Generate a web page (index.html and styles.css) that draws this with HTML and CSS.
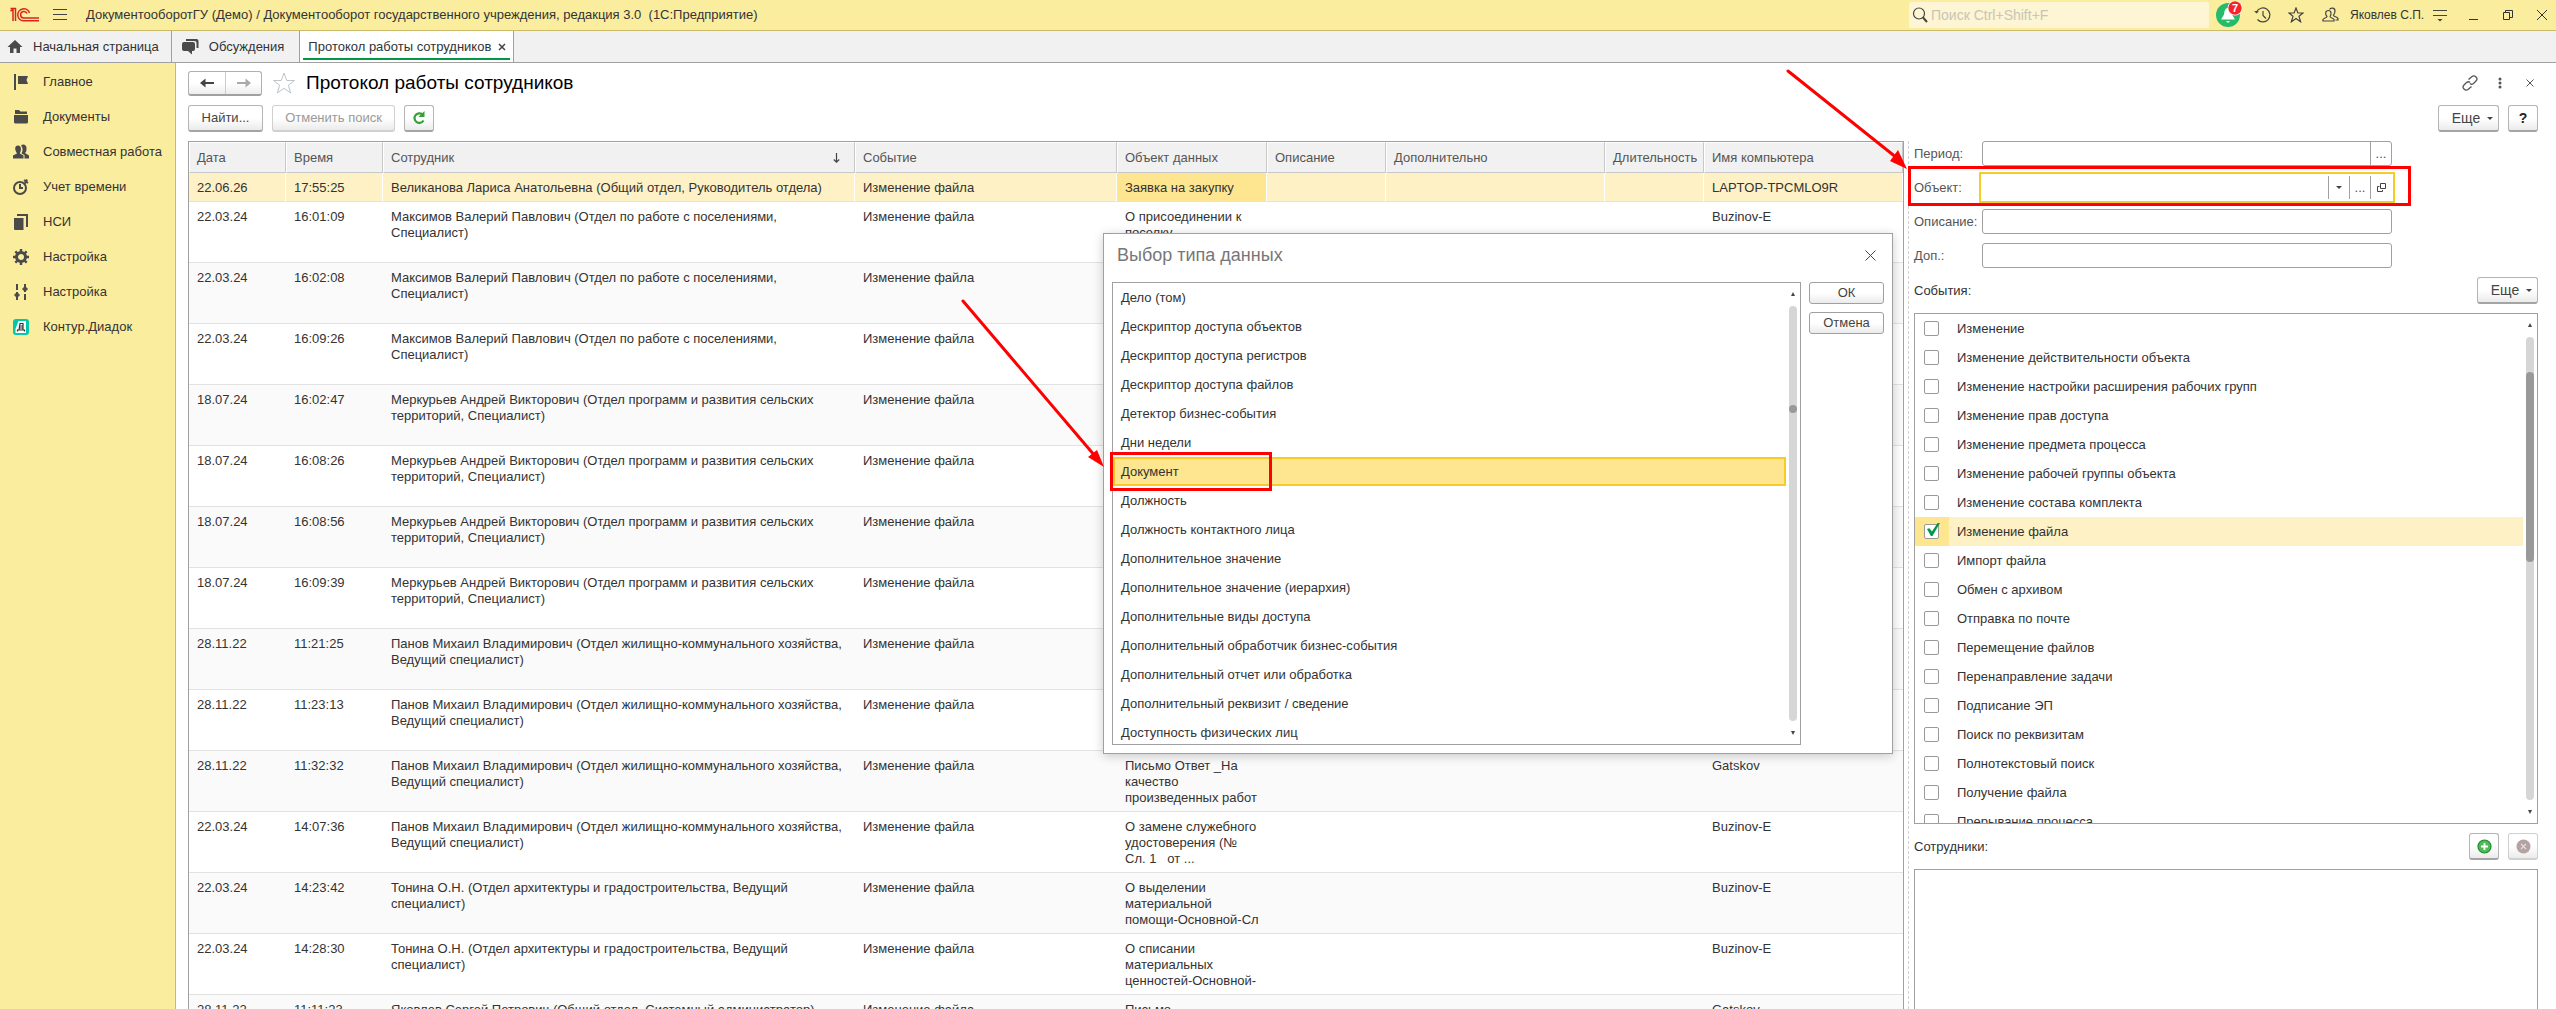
FILE: index.html
```html
<!DOCTYPE html>
<html lang="ru">
<head>
    <meta charset="UTF-8">
    <meta name="viewport" content="width=device-width, initial-scale=1.0">
    <title>Протокол работы сотрудников</title>
    <link rel="stylesheet" href="styles.css">
</head>
<body>
    <!-- title bar -->
    <header class="topbar">
        <svg class="logo" width="30" height="16" viewBox="0 0 30 16" fill="none" stroke="#d9251d" stroke-width="1.500">
            <path d="M.5 4L3 2.500V14M.5 1.500H5.500V14"/>
            <path d="M19.500 6A6 6 0 1 0 13.500 13.800H29M17 6.500A3.300 3.300 0 1 0 13.500 11H29"/>
        </svg>
        <button class="icon-btn" aria-label="Меню">
            <svg width="14" height="12" viewBox="0 0 14 12" stroke="#444" stroke-width="1"><path d="M0 .5H14M0 5.500H14M0 10.500H14"/></svg>
        </button>
        <div class="app-title">ДокументооборотГУ (Демо) / Документооборот государственного учреждения, редакция 3.0&nbsp; (1С:Предприятие)</div>
        <label class="search">
            <svg width="16" height="16" viewBox="0 0 16 16" fill="none" stroke="#444"><circle cx="7" cy="6.500" r="5.500" stroke-width="1.200"/><path d="M11 10.500L15 15" stroke-width="2"/></svg>
            <input type="text" placeholder="Поиск Ctrl+Shift+F" aria-label="Поиск">
        </label>
        <div class="top-icons">
            <button class="icon-btn" aria-label="Оповещения">
                <svg width="28" height="28" viewBox="0 0 28 28"><circle cx="14" cy="14" r="12" fill="#27bb69"/><path d="M14 7C11 7 10.500 10 10 13.500L7 18.500H21L18 13.500C17.500 10 17 7 14 7ZM12 20H16L14 22Z" fill="#fff"/><circle cx="21" cy="7" r="7.500" fill="#fff"/><circle cx="21" cy="7" r="6.700" fill="#f8222c"/></svg>
                <span class="badge">7</span>
            </button>
            <button class="icon-btn" aria-label="История">
                <svg width="17" height="16" viewBox="0 0 17 16" fill="none" stroke="#444" stroke-width="1.200"><path d="M2.500 5A7 7 0 1 1 3.500 12.500M9 4V8.500L12 11.500"/><path d="M0 4L2.500 6.500L5 4.500Z" fill="#444" stroke="none"/></svg>
            </button>
            <button class="icon-btn" aria-label="Избранное">
                <svg width="16" height="16" viewBox="0 0 16 16" fill="none" stroke="#444" stroke-width="1.200"><path d="M8 1L9.900 6H15L11 9.200L12.600 14.800L8 11.500L3.400 14.800L5 9.200L1 6H6.100Z"/></svg>
            </button>
            <button class="icon-btn" aria-label="Пользователи">
                <svg width="17" height="16" viewBox="0 0 17 16" fill="none" stroke="#444" stroke-width="1.200"><path d="M1 14V12.500C1.500 11 5 11 5 9.500C3 7.500 3 3.500 6.300 3.500S9.600 7.500 8 9.500C8 11 11.500 11 12 12.500V14ZM7.500 2.500C8.500 .5 13 .5 13 4C13 6 12.500 7 11.500 8.200C11.500 10 15.500 9.500 16 11.500V13H13.500"/></svg>
            </button>
            <span class="user-name">Яковлев С.П.</span>
            <button class="icon-btn" aria-label="Настройки окна">
                <svg width="14" height="14" viewBox="0 0 14 14"><path d="M0 2.500H14M0 7.500H14" stroke="#444" stroke-width="1"/><path d="M4.500 11H9.500L7 13.500Z" fill="#444"/></svg>
            </button>
            <button class="icon-btn" aria-label="Свернуть">
                <svg width="10" height="10" viewBox="0 0 10 10"><path d="M0 9.500H9" stroke="#333"/></svg>
            </button>
            <button class="icon-btn" aria-label="Развернуть">
                <svg width="10" height="10" viewBox="0 0 10 10" fill="none" stroke="#333"><path d="M2.500 2.500V.5H9.500V7.500H6.500M.5 2.500H6.500V9.500H.5Z"/></svg>
            </button>
            <button class="icon-btn" aria-label="Закрыть">
                <svg width="10" height="10" viewBox="0 0 10 10" stroke="#333"><path d="M0 0L10 10M10 0L0 10"/></svg>
            </button>
        </div>
    </header>

    <!-- open tabs -->
    <nav class="tabs">
        <a class="tab" href="#">
            <svg width="16" height="14" viewBox="0 0 16 14" fill="#4a4a4a"><path d="M8 0L15.500 7H13V13H9.500V8.500H6.500V13H3V7H.5Z"/></svg>
            Начальная страница
        </a>
        <a class="tab" href="#">
            <svg width="17" height="16" viewBox="0 0 17 16" fill="#4a4a4a"><path d="M2 3H11Q13 3 13 5V10Q13 12 11 12H10V15.500L6 12H2Q0 12 0 10V5Q0 3 2 3Z"/><path d="M4 0H14.500Q16.500 0 16.500 2V9H14.500V4Q14.500 2 12.500 2H4Z"/></svg>
            Обсуждения
        </a>
        <a class="tab active" href="#">
            Протокол работы сотрудников
            <svg width="8" height="8" viewBox="0 0 8 8" stroke="#444" stroke-width="1.500"><path d="M1 1L7 7M7 1L1 7"/></svg>
        </a>
    </nav>

    <div class="workspace">
        <!-- sections -->
        <nav class="sidebar">
            <a href="#"><svg width="16" height="16" viewBox="0 0 16 16" fill="#4a4a4a"><path d="M1 0H3V16H1ZM5 2H15L13.500 6L15 10H5Z"/></svg>Главное</a>
            <a href="#"><svg width="16" height="16" viewBox="0 0 16 16" fill="#4a4a4a"><path d="M2 1H6L7.500 2.500H14V5H2ZM1 6H15V13Q15 14.500 13.500 14.500H2.500Q1 14.500 1 13Z"/></svg>Документы</a>
            <a href="#"><svg width="16" height="16" viewBox="0 0 16 16" fill="#4a4a4a"><path d="M0 14.500V11.500L4 9.500C1 5 2 1.500 5 1.500S9 5 6.800 9.500L10.500 11.500V14.500ZM8 1.500C10 -.5 14 .5 13.500 5C13.500 7 13 8 12 9L16 11.500V14.500H11.500V11L8.500 9.500C10 7 10 4 8 1.500Z"/></svg>Совместная работа</a>
            <a href="#"><svg width="16" height="16" viewBox="0 0 16 16" fill="none" stroke="#4a4a4a" stroke-width="2"><circle cx="7" cy="9" r="6"/><path d="M7 5V9H10M11 1L15 4M14 .5L12 4.500"/></svg>Учет времени</a>
            <a href="#"><svg width="16" height="16" viewBox="0 0 16 16" fill="#4a4a4a"><path d="M1 4H10.500V16H2Q1 16 1 15ZM4 0H15V13H13V2H4Z"/></svg>НСИ</a>
            <a href="#"><svg width="16" height="16" viewBox="0 0 16 16" fill="none" stroke="#4a4a4a"><circle cx="8" cy="8" r="4.500" stroke-width="3"/><path d="M8 0V3M8 13V16M0 8H3M13 8H16M2.300 2.300L4.500 4.500M11.500 11.500L13.700 13.700M2.300 13.700L4.500 11.500M11.500 4.500L13.700 2.300" stroke-width="2.400"/></svg>Настройка</a>
            <a href="#"><svg width="16" height="16" viewBox="0 0 16 16" fill="#4a4a4a"><path d="M3 0H5V6H3ZM3 8H5V16H3ZM11 0H13V8H11ZM11 10H13V16H11Z"/><path d="M4 8.500L6.500 11L4 13.500L1.500 11ZM12 2.500L14.500 5L12 7.500L9.500 5Z" stroke="#4a4a4a"/></svg>Настройка</a>
            <a href="#"><svg width="16" height="16" viewBox="0 0 16 16"><rect width="16" height="16" rx="3" fill="#00c8aa"/><path d="M5.500 2H13V14H2.500V10Z" fill="#fff"/><path d="M4.500 12.500V11H11.500V12.500M6 11L7 4.500H10V11M7 7H10M6.500 9H10" fill="none" stroke="#333" stroke-width="1.200"/></svg>Контур.Диадок</a>
        </nav>

        <main class="page">
            <div class="page-head">
                <div class="nav-buttons">
                    <button aria-label="Назад"><svg width="14" height="10" viewBox="0 0 14 10" fill="#444"><path d="M0 5L5.500 .5V4H14V6H5.500V9.500Z"/></svg></button>
                    <button aria-label="Вперед"><svg width="14" height="10" viewBox="0 0 14 10" fill="#aaa"><path d="M14 5L8.500 .5V4H0V6H8.500V9.500Z"/></svg></button>
                </div>
                <svg width="24" height="24" viewBox="0 0 24 24" fill="none" stroke="#bcc3c9"><path d="M12 2L14.800 9.500H22.500L16.400 14.200L18.700 22L12 17.300L5.300 22L7.600 14.200L1.500 9.500H9.200Z"/></svg>
                <h1>Протокол работы сотрудников</h1>
                <div class="page-icons">
                    <button class="icon-btn" aria-label="Ссылка"><svg width="16" height="16" viewBox="0 0 16 16" fill="none" stroke="#555" stroke-width="1.300"><path d="M6.500 4.500L10 1.500Q12 0 14 2T14 6L11.500 8.500Q9.500 10 8 8.500M9.500 11.500L6 14.500Q4 16 2 14T2 10L4.500 7.500Q6.500 6 8 7.500"/></svg></button>
                    <button class="icon-btn" aria-label="Дополнительно"><svg width="4" height="12" viewBox="0 0 4 12" fill="#555"><circle cx="2" cy="2" r="1.500"/><circle cx="2" cy="6" r="1.500"/><circle cx="2" cy="10" r="1.500"/></svg></button>
                    <button class="icon-btn" aria-label="Закрыть форму"><svg width="8" height="8" viewBox="0 0 8 8" stroke="#555"><path d="M.5 .5L7.500 7.500M7.500 .5L.5 7.500"/></svg></button>
                </div>
            </div>

            <div class="toolbar">
                <button class="btn find">Найти...</button>
                <button class="btn cancel" disabled>Отменить поиск</button>
                <button class="btn square" aria-label="Обновить"><svg width="14" height="14" viewBox="0 0 14 14"><path d="M10.500 3.500A4.800 4.800 0 1 0 11.500 9.500" fill="none" stroke="#35a035" stroke-width="2.200"/><path d="M12.500 0V6H6.500Z" fill="#35a035"/></svg></button>
                <span class="spacer"></span>
                <button class="btn more">Еще<i class="caret"></i></button>
                <button class="btn square help">?</button>
            </div>

            <div class="content">
                <div class="log">
                    <table>
                        <colgroup>
                            <col class="c-date"><col class="c-time"><col class="c-user"><col class="c-event"><col class="c-object"><col class="c-desc"><col class="c-extra"><col class="c-length"><col class="c-host">
                        </colgroup>
                        <thead>
                            <tr>
                                <th>Дата</th>
                                <th>Время</th>
                                <th><div class="sorted">Сотрудник<svg width="7" height="10" viewBox="0 0 7 10" fill="none" stroke="#444" stroke-width="1.200"><path d="M3.500 0V9M.8 6.500L3.500 9.200L6.200 6.500"/></svg></div></th>
                                <th>Событие</th>
                                <th>Объект данных</th>
                                <th>Описание</th>
                                <th>Дополнительно</th>
                                <th>Длительность</th>
                                <th>Имя компьютера</th>
                            </tr>
                        </thead>
                        <tbody>
                            <tr class="current"><td>22.06.26</td><td>17:55:25</td><td>Великанова Лариса Анатольевна (Общий отдел, Руководитель отдела)</td><td>Изменение файла</td><td class="cell-active">Заявка на закупку</td><td></td><td></td><td></td><td>LAPTOP-TPCMLO9R</td></tr>
                            <tr><td>22.03.24</td><td>16:01:09</td><td>Максимов Валерий Павлович (Отдел по работе с поселениями, Специалист)</td><td>Изменение файла</td><td>О присоединении к поселку</td><td></td><td></td><td></td><td>Buzinov-E</td></tr>
                            <tr><td>22.03.24</td><td>16:02:08</td><td>Максимов Валерий Павлович (Отдел по работе с поселениями, Специалист)</td><td>Изменение файла</td><td></td><td></td><td></td><td></td><td></td></tr>
                            <tr><td>22.03.24</td><td>16:09:26</td><td>Максимов Валерий Павлович (Отдел по работе с поселениями, Специалист)</td><td>Изменение файла</td><td></td><td></td><td></td><td></td><td></td></tr>
                            <tr><td>18.07.24</td><td>16:02:47</td><td>Меркурьев Андрей Викторович (Отдел программ и развития сельских территорий, Специалист)</td><td>Изменение файла</td><td></td><td></td><td></td><td></td><td></td></tr>
                            <tr><td>18.07.24</td><td>16:08:26</td><td>Меркурьев Андрей Викторович (Отдел программ и развития сельских территорий, Специалист)</td><td>Изменение файла</td><td></td><td></td><td></td><td></td><td></td></tr>
                            <tr><td>18.07.24</td><td>16:08:56</td><td>Меркурьев Андрей Викторович (Отдел программ и развития сельских территорий, Специалист)</td><td>Изменение файла</td><td></td><td></td><td></td><td></td><td></td></tr>
                            <tr><td>18.07.24</td><td>16:09:39</td><td>Меркурьев Андрей Викторович (Отдел программ и развития сельских территорий, Специалист)</td><td>Изменение файла</td><td></td><td></td><td></td><td></td><td></td></tr>
                            <tr><td>28.11.22</td><td>11:21:25</td><td>Панов Михаил Владимирович (Отдел жилищно-коммунального хозяйства, Ведущий специалист)</td><td>Изменение файла</td><td></td><td></td><td></td><td></td><td></td></tr>
                            <tr><td>28.11.22</td><td>11:23:13</td><td>Панов Михаил Владимирович (Отдел жилищно-коммунального хозяйства, Ведущий специалист)</td><td>Изменение файла</td><td></td><td></td><td></td><td></td><td></td></tr>
                            <tr><td>28.11.22</td><td>11:32:32</td><td>Панов Михаил Владимирович (Отдел жилищно-коммунального хозяйства, Ведущий специалист)</td><td>Изменение файла</td><td>Письмо Ответ _На<br>качество<br>произведенных работ</td><td></td><td></td><td></td><td>Gatskov</td></tr>
                            <tr><td>22.03.24</td><td>14:07:36</td><td>Панов Михаил Владимирович (Отдел жилищно-коммунального хозяйства, Ведущий специалист)</td><td>Изменение файла</td><td>О замене служебного<br>удостоверения (№<br>Сл. 1 &nbsp; от ...</td><td></td><td></td><td></td><td>Buzinov-E</td></tr>
                            <tr><td>22.03.24</td><td>14:23:42</td><td>Тонина О.Н. (Отдел архитектуры и градостроительства, Ведущий специалист)</td><td>Изменение файла</td><td>О выделении<br>материальной<br>помощи-Основной-Сл</td><td></td><td></td><td></td><td>Buzinov-E</td></tr>
                            <tr><td>22.03.24</td><td>14:28:30</td><td>Тонина О.Н. (Отдел архитектуры и градостроительства, Ведущий специалист)</td><td>Изменение файла</td><td>О списании<br>материальных<br>ценностей-Основной-</td><td></td><td></td><td></td><td>Buzinov-E</td></tr>
                            <tr><td>28.11.22</td><td>11:11:23</td><td>Яковлев Сергей Петрович (Общий отдел, Системный администратор)</td><td>Изменение файла</td><td>Письмо</td><td></td><td></td><td></td><td>Gatskov</td></tr>
                        </tbody>
                    </table>
                </div>

                <!-- filters -->
                <aside class="filters">
                    <div class="form">
                        <label for="period">Период:</label>
                        <div class="field">
                            <input type="text" id="period">
                            <button aria-label="Выбрать период">...</button>
                        </div>
                        <label for="object">Объект:</label>
                        <div class="field focused">
                            <input type="text" id="object">
                            <button aria-label="Список"><i class="caret"></i></button>
                            <button aria-label="Выбрать объект">...</button>
                            <button aria-label="Открыть"><svg width="9" height="9" viewBox="0 0 9 9" fill="none" stroke="#444"><path d="M3.500 .5H8.500V5.500H3.500ZM2.500 3.500H.5V8.500H5.500V7"/></svg></button>
                            <div class="mark mark-field"></div>
                            <svg class="arrow arrow-field" width="122" height="102" viewBox="0 0 122 102"><path d="M2 2L111 89" stroke="#f00" stroke-width="3" stroke-linecap="round"/><path d="M121 100L104 92L112 81Z" fill="#f00"/></svg>
                        </div>
                        <label for="descr">Описание:</label>
                        <div class="field"><input type="text" id="descr"></div>
                        <label for="extra">Доп.:</label>
                        <div class="field"><input type="text" id="extra"></div>
                    </div>

                    <div class="group-head">
                        <span>События:</span>
                        <button class="btn more">Еще<i class="caret"></i></button>
                    </div>
                    <div class="list events">
                        <ul>
                            <li><label><span class="tick"><input type="checkbox"></span>Изменение</label></li>
                            <li><label><span class="tick"><input type="checkbox"></span>Изменение действительности объекта</label></li>
                            <li><label><span class="tick"><input type="checkbox"></span>Изменение настройки расширения рабочих групп</label></li>
                            <li><label><span class="tick"><input type="checkbox"></span>Изменение прав доступа</label></li>
                            <li><label><span class="tick"><input type="checkbox"></span>Изменение предмета процесса</label></li>
                            <li><label><span class="tick"><input type="checkbox"></span>Изменение рабочей группы объекта</label></li>
                            <li><label><span class="tick"><input type="checkbox"></span>Изменение состава комплекта</label></li>
                            <li class="current"><label><span class="tick"><input type="checkbox" checked></span>Изменение файла</label></li>
                            <li><label><span class="tick"><input type="checkbox"></span>Импорт файла</label></li>
                            <li><label><span class="tick"><input type="checkbox"></span>Обмен с архивом</label></li>
                            <li><label><span class="tick"><input type="checkbox"></span>Отправка по почте</label></li>
                            <li><label><span class="tick"><input type="checkbox"></span>Перемещение файлов</label></li>
                            <li><label><span class="tick"><input type="checkbox"></span>Перенаправление задачи</label></li>
                            <li><label><span class="tick"><input type="checkbox"></span>Подписание ЭП</label></li>
                            <li><label><span class="tick"><input type="checkbox"></span>Поиск по реквизитам</label></li>
                            <li><label><span class="tick"><input type="checkbox"></span>Полнотекстовый поиск</label></li>
                            <li><label><span class="tick"><input type="checkbox"></span>Получение файла</label></li>
                            <li><label><span class="tick"><input type="checkbox"></span>Прерывание процесса</label></li>
                        </ul>
                        <div class="scroll">
                            <i class="up"></i>
                            <div class="track"><div class="thumb"></div></div>
                            <i class="down"></i>
                        </div>
                    </div>

                    <div class="group-head">
                        <span>Сотрудники:</span>
                        <div class="group-buttons">
                            <button class="btn square" aria-label="Добавить"><svg width="15" height="15" viewBox="0 0 15 15"><circle cx="7.500" cy="7.500" r="6.500" fill="#4fba58" stroke="#1f8a2c" stroke-width="1.200"/><path d="M7.500 4V11M4 7.500H11" stroke="#fff" stroke-width="1.800"/></svg></button>
                            <button class="btn square" aria-label="Удалить" disabled><svg width="15" height="15" viewBox="0 0 15 15"><circle cx="7.500" cy="7.500" r="7" fill="#b5a3a3"/><path d="M5 5L10 10M10 5L5 10" stroke="#ddd" stroke-width="1.300"/></svg></button>
                        </div>
                    </div>
                    <div class="list staff"></div>
                </aside>
            </div>
        </main>
    </div>

    <!-- type picker -->
    <div class="dialog" role="dialog" aria-labelledby="dialog-title">
        <div class="dialog-head">
            <h2 id="dialog-title">Выбор типа данных</h2>
            <button class="icon-btn" aria-label="Закрыть окно"><svg width="11" height="11" viewBox="0 0 11 11" stroke="#444"><path d="M.5 .5L10.500 10.500M10.500 .5L.5 10.500"/></svg></button>
        </div>
        <div class="dialog-body">
            <div class="list types">
                <ul>
                    <li>Дело (том)</li>
                    <li>Дескриптор доступа объектов</li>
                    <li>Дескриптор доступа регистров</li>
                    <li>Дескриптор доступа файлов</li>
                    <li>Детектор бизнес-события</li>
                    <li>Дни недели</li>
                    <li class="selected">Документ</li>
                    <li>Должность</li>
                    <li>Должность контактного лица</li>
                    <li>Дополнительное значение</li>
                    <li>Дополнительное значение (иерархия)</li>
                    <li>Дополнительные виды доступа</li>
                    <li>Дополнительный обработчик бизнес-события</li>
                    <li>Дополнительный отчет или обработка</li>
                    <li>Дополнительный реквизит / сведение</li>
                    <li>Доступность физических лиц</li>
                </ul>
                <div class="scroll">
                    <i class="up"></i>
                    <div class="track"><div class="thumb"></div></div>
                    <i class="down"></i>
                </div>
            </div>
            <div class="dialog-buttons">
                <button class="btn">ОК</button>
                <button class="btn">Отмена</button>
            </div>
        </div>
        <div class="mark mark-type"></div>
        <svg class="arrow arrow-type" width="144" height="170" viewBox="0 0 144 170"><path d="M2 2L134 157" stroke="#f00" stroke-width="3" stroke-linecap="round"/><path d="M143 168L127 158L136 151Z" fill="#f00"/></svg>
    </div>
</body>
</html>
```
FILE: styles.css
```css
* {
    box-sizing: border-box;
}
body {
    margin: 0;
    height: 100vh;
    display: flex;
    flex-direction: column;
    overflow: hidden;
    position: relative;
    font-family: "Liberation Sans", Arial, sans-serif;
    font-size: 13px;
    line-height: 16px;
    color: #333;
    background: #fff;
}
button, input {
    font: inherit;
    color: inherit;
}
button {
    padding: 0;
    border: none;
    background: none;
    cursor: pointer;
}
a {
    color: inherit;
    text-decoration: none;
}
ul {
    list-style: none;
    margin: 0;
    padding: 0;
}
svg {
    flex: none;
    display: block;
}

/* title bar */
.topbar {
    display: flex;
    align-items: center;
    height: 31px;
    padding-left: 10px;
    background: #fbed9e;
    border-bottom: 1px solid #c9bb6a;
}
.icon-btn {
    display: flex;
    align-items: center;
    justify-content: center;
    width: 28px;
    height: 28px;
    position: relative;
}
.logo {
    margin-right: 6px;
}
.app-title {
    flex: 1;
    margin-left: 12px;
    white-space: nowrap;
}
.search {
    display: flex;
    align-items: center;
    width: 300px;
    height: 26px;
    padding-left: 3px;
    gap: 3px;
    background: #fdf5d3;
    border-radius: 2px;
}
.search input {
    flex: 1;
    min-width: 0;
    border: none;
    background: none;
    padding: 0;
    font-size: 14px;
    outline: none;
}
.search input::placeholder {
    color: #c9c5b5;
}
.top-icons {
    display: flex;
    align-items: center;
    gap: 6px;
    margin-left: 5px;
}
.badge {
    position: absolute;
    top: 0;
    right: 0;
    width: 14px;
    line-height: 14px;
    color: #fff;
    font-size: 11px;
    font-weight: bold;
    text-align: center;
}
.user-name {
    width: 70px;
    font-size: 12px;
    white-space: nowrap;
}

/* tabs */
.tabs {
    display: flex;
    height: 32px;
    background: #f1f1f1;
    border-bottom: 1px solid #a0a0a0;
}
.tab {
    display: flex;
    align-items: center;
    gap: 10px;
    padding: 0 12px 0 7px;
    border-right: 1px solid #a0a0a0;
    white-space: nowrap;
}
.tab + .tab {
    padding: 0 15px 0 10px;
}
.tab.tab.active {
    gap: 7px;
    padding: 0 7px 0 8px;
    background: linear-gradient(#009846, #009846) 3px 27px / calc(100% - 6px) 2px no-repeat, #fff;
}

/* sections */
.workspace {
    flex: 1;
    display: flex;
    min-height: 0;
}
.sidebar {
    flex: none;
    width: 176px;
    padding-top: 1px;
    background: #fbed9e;
    border-right: 1px solid #c9bb6a;
}
.sidebar a {
    display: flex;
    align-items: center;
    gap: 14px;
    height: 35px;
    padding-left: 13px;
}

/* page */
.page {
    flex: 1;
    min-width: 0;
    display: flex;
    flex-direction: column;
    gap: 10px;
    padding: 8px 18px 0 12px;
}
.page-head {
    display: flex;
    align-items: center;
    height: 24px;
    gap: 10px;
}
.nav-buttons {
    display: flex;
    height: 25px;
    border: 1px solid #b0b0b0;
    border-bottom: 2px solid #a0a0a0;
    border-radius: 3px;
    background: linear-gradient(#fff 50%, #ededed);
}
.nav-buttons button {
    display: flex;
    align-items: center;
    justify-content: center;
    width: 36px;
}
.nav-buttons button + button {
    border-left: 1px solid #ccc;
}
h1 {
    flex: 1;
    margin: 0;
    font-size: 19px;
    font-weight: normal;
    color: #000;
}
.page-icons {
    display: flex;
    gap: 2px;
    margin-right: -6px;
}
.toolbar {
    display: flex;
    gap: 9px;
    height: 26px;
}
.btn {
    display: flex;
    align-items: center;
    justify-content: center;
    height: 27px;
    border: 1px solid #b4b4b4;
    border-bottom: 2px solid #a4a4a4;
    border-radius: 3px;
    background: linear-gradient(#fff 50%, #ebebeb);
    color: #444;
}
.btn:disabled {
    border-color: #d0d0d0;
    color: #999;
}
.find {
    width: 75px;
}
.cancel {
    width: 123px;
}
.square {
    width: 30px;
}
.help {
    font-size: 14px;
    font-weight: bold;
    color: #222;
}
.spacer {
    flex: 1;
}
.more {
    width: 61px;
    gap: 7px;
    padding-left: 8px;
    font-size: 14px;
}
.caret {
    border: 3px solid transparent;
    border-top-color: #444;
    border-bottom: none;
}

/* log table */
.content {
    flex: 1;
    min-height: 0;
    display: flex;
    gap: 4px;
}
.log {
    flex: 1;
    min-width: 0;
    overflow: hidden;
    border: 1px solid #a0a0a0;
    border-bottom: none;
}
table {
    width: 100%;
    table-layout: fixed;
    border-collapse: separate;
    border-spacing: 0;
}
.c-date, .c-time {
    width: 97px;
}
.c-event {
    width: 262px;
}
.c-object {
    width: 150px;
}
.c-desc {
    width: 119px;
}
.c-extra {
    width: 219px;
}
.c-length {
    width: 99px;
}
.c-host {
    width: 199px;
}
th {
    height: 31px;
    padding: 0 0 0 7px;
    font-weight: normal;
    text-align: left;
    color: #555;
    background: #f1f1f1;
    border: 1px solid #fff;
    border-right-color: #c8c8c8;
    border-bottom-color: #c8c8c8;
    white-space: nowrap;
}
.sorted {
    display: flex;
    align-items: center;
    justify-content: space-between;
    padding-right: 14px;
}
td {
    height: 61px;
    padding: 7px 6px 5px 8px;
    vertical-align: top;
    border-bottom: 1px solid #e2e2e2;
}
tr:nth-child(odd) td {
    background: #fafafa;
}
tr.current td {
    height: 29px;
    background: #fdf1c5;
    border-right: 1px solid #fff;
}
tr.current .cell-active {
    background: #fee58f;
}

/* filters */
.filters {
    flex: none;
    width: 630px;
    display: flex;
    flex-direction: column;
    padding-left: 5px;
    border-left: 1px dashed #d0d0d0;
}
.form {
    display: grid;
    grid-template-columns: 68px 410px;
    row-gap: 9px;
    align-items: center;
    color: #555;
}
.field {
    display: flex;
    position: relative;
    height: 25px;
    border: 1px solid #a0a0a0;
    border-radius: 3px;
    background: #fff;
}
.field input {
    flex: 1;
    min-width: 0;
    padding: 0 6px;
    border: none;
    background: none;
    outline: none;
}
.field button {
    display: flex;
    align-items: center;
    justify-content: center;
    width: 21px;
    border-left: 1px solid #a0a0a0;
}
.field.focused {
    border-color: #fff;
    outline: 2px solid #f8cc26;
    outline-offset: 1px;
    border-radius: 0;
}
.group-head {
    display: flex;
    align-items: center;
    justify-content: space-between;
    height: 27px;
    margin: 9px 0;
}
.group-buttons {
    display: flex;
    gap: 9px;
}
.list {
    display: flex;
    border: 1px solid #a0a0a0;
    background: #fff;
    overflow: hidden;
}
.list ul {
    flex: 1;
}
.list li {
    height: 29px;
    line-height: 29px;
}
.events {
    flex: none;
    height: 511px;
}
.events label {
    display: flex;
    gap: 8px;
}
.tick {
    display: flex;
    align-items: center;
    width: 34px;
    height: 29px;
    padding-left: 9px;
}
.tick input {
    appearance: none;
    position: relative;
    width: 15px;
    height: 15px;
    margin: 0;
    border: 1px solid #999;
    border-radius: 2px;
    background: #fff;
}
.tick input:checked::after {
    content: "";
    position: absolute;
    left: 2px;
    top: -2px;
    width: 13px;
    height: 13px;
    background: #009846;
    clip-path: polygon(0 46%, 18% 40%, 38% 66%, 82% 0, 100% 0, 42% 100%, 30% 100%);
}
.events .current {
    background: #fdf1c5;
}
.events .current .tick {
    background: #fee58f;
}
.staff {
    flex: 1;
    border-bottom: none;
}

/* scroll bars */
.scroll {
    display: flex;
    flex-direction: column;
    align-items: center;
    justify-content: space-between;
    width: 14px;
    padding: 9px 0;
}
.up, .down {
    border: 2px solid transparent;
}
.up {
    border-top: none;
    border-bottom: 4px solid #444;
}
.down {
    border-bottom: none;
    border-top: 4px solid #444;
}
.track {
    display: flex;
    flex: 1;
    width: 8px;
    margin: 10px 0;
    border-radius: 4px;
    background: #d6d6d6;
}
.thumb {
    width: 8px;
    border-radius: 4px;
    background: #999;
}
.events .thumb {
    height: 190px;
    margin-top: 35px;
}

/* type picker */
.dialog {
    position: absolute;
    top: 233px;
    left: 1103px;
    width: 790px;
    padding: 0 8px 8px;
    border: 1px solid #a0a0a0;
    background: #fff;
    box-shadow: 0 2px 10px rgba(0, 0, 0, 0.2);
}
.dialog-head {
    display: flex;
    align-items: center;
    justify-content: space-between;
    height: 48px;
    padding: 0 0 6px 5px;
}
h2 {
    margin: 0;
    font-size: 18px;
    font-weight: normal;
    color: #777;
}
.dialog-body {
    display: flex;
    gap: 8px;
}
.types {
    flex: 1;
    height: 463px;
}
.types li {
    padding-left: 8px;
}
.types .selected {
    padding-left: 6px;
    line-height: 25px;
    border: 2px solid #f8cc26;
    background: #fee58f;
}
.types .thumb {
    height: 8px;
    margin-top: 99px;
}
.dialog-buttons {
    display: flex;
    flex-direction: column;
    gap: 8px;
    width: 75px;
}
.dialog-buttons .btn {
    height: 22px;
    border: 1px solid #a0a0a0;
}

/* red callouts */
.mark {
    position: absolute;
    border: 3px solid #f00;
    pointer-events: none;
}
.mark-field {
    top: -10px;
    left: -75px;
    width: 503px;
    height: 40px;
}
.arrow {
    position: absolute;
    pointer-events: none;
}
.arrow-field {
    top: -107px;
    left: -197px;
}
.mark-type {
    top: 218px;
    left: 6px;
    width: 162px;
    height: 39px;
}
.arrow-type {
    top: 65px;
    left: -143px;
}
```
